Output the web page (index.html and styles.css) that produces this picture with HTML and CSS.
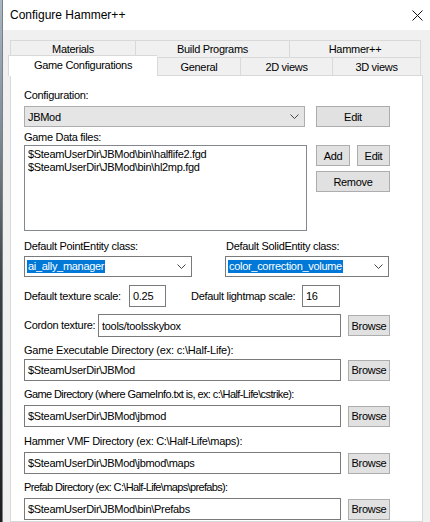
FILE: index.html
```html
<!DOCTYPE html>
<html>
<head>
<meta charset="utf-8">
<title>Configure Hammer++</title>
<link rel="stylesheet" href="styles.css">
</head>
<body>
<div class="screen">
  <div class="desk"></div>
  <div class="window">
    <div class="titlebar">
      <span class="title">Configure Hammer++</span>
      <svg class="close" width="11" height="11" viewBox="0 0 11 11"><path d="M0.5 0.5L10.5 10.5M10.5 0.5L0.5 10.5" stroke="#111" stroke-width="1" fill="none"/></svg>
    </div>
    <div class="client">
      <div class="tabs">
        <div class="tabrow row1">
          <div class="tab t-mat">Materials</div>
          <div class="tab t-build">Build Programs</div>
          <div class="tab t-hpp last">Hammer++</div>
        </div>
        <div class="tabrow row2">
          <div class="tab sel">Game Configurations</div>
          <div class="tab t-gen">General</div>
          <div class="tab t-2d">2D views</div>
          <div class="tab t-3d last">3D views</div>
        </div>
      </div>
      <div class="panel">
        <div class="lbl">Configuration:</div>
        <div class="row cfg">
          <div class="combo gray cfg-combo">
            <span>JBMod</span>
            <svg class="chev" width="9" height="5" viewBox="0 0 9 5"><polyline points="0.5,0.5 4.5,4.5 8.5,0.5" fill="none" stroke="#444" stroke-width="1"/></svg>
          </div>
          <div class="btn wide-btn">Edit</div>
        </div>
        <div class="lbl gap4">Game Data files:</div>
        <div class="row files">
          <div class="listbox">
            <div class="item">$SteamUserDir\JBMod\bin\halflife2.fgd</div>
            <div class="item">$SteamUserDir\JBMod\bin\hl2mp.fgd</div>
          </div>
          <div class="btncol">
            <div class="btnpair">
              <div class="btn add-btn">Add</div>
              <div class="btn edit-btn">Edit</div>
            </div>
            <div class="btn wide-btn remove-btn">Remove</div>
          </div>
        </div>
        <div class="row ents">
          <div class="field f-point">
            <div class="lbl">Default PointEntity class:</div>
            <div class="combo white">
              <span class="hl">ai_ally_manager</span>
              <svg class="chev" width="9" height="5" viewBox="0 0 9 5"><polyline points="0.5,0.5 4.5,4.5 8.5,0.5" fill="none" stroke="#444" stroke-width="1"/></svg>
            </div>
          </div>
          <div class="field f-solid">
            <div class="lbl">Default SolidEntity class:</div>
            <div class="combo white">
              <span class="hl">color_correction_volume</span>
              <svg class="chev" width="9" height="5" viewBox="0 0 9 5"><polyline points="0.5,0.5 4.5,4.5 8.5,0.5" fill="none" stroke="#444" stroke-width="1"/></svg>
            </div>
          </div>
        </div>
        <div class="row scales">
          <span class="lbl l-tex">Default texture scale:</span>
          <div class="tb tb-tex">0.25</div>
          <span class="lbl l-light">Default lightmap scale:</span>
          <div class="tb tb-light">16</div>
        </div>
        <div class="row cordon">
          <span class="lbl l-cordon">Cordon texture:</span>
          <div class="tb tb-cordon">tools/toolsskybox</div>
          <div class="btn browse">Browse</div>
        </div>
        <div class="lbl l-exec gap7">Game Executable Directory (ex: c:\Half-Life):</div>
        <div class="row dir first-dir">
          <div class="tb tb-dir">$SteamUserDir\JBMod</div>
          <div class="btn browse">Browse</div>
        </div>
        <div class="lbl l-game gap7">Game Directory (where GameInfo.txt is, ex: c:\Half-Life\cstrike):</div>
        <div class="row dir">
          <div class="tb tb-dir">$SteamUserDir\JBMod\jbmod</div>
          <div class="btn browse">Browse</div>
        </div>
        <div class="lbl l-vmf gap8">Hammer VMF Directory (ex: C:\Half-Life\maps):</div>
        <div class="row dir">
          <div class="tb tb-dir">$SteamUserDir\JBMod\jbmod\maps</div>
          <div class="btn browse">Browse</div>
        </div>
        <div class="lbl l-prefab gap7">Prefab Directory (ex: C:\Half-Life\maps\prefabs):</div>
        <div class="row dir">
          <div class="tb tb-dir">$SteamUserDir\JBMod\bin\Prefabs</div>
          <div class="btn browse">Browse</div>
        </div>
      </div>
    </div>
  </div>
</div>
</body>
</html>
```
FILE: styles.css
```css
* { box-sizing: border-box; }
html, body { margin: 0; padding: 0; }
body {
  width: 430px;
  height: 522px;
  overflow: hidden;
  background: #f0f0f0;
  font-family: "Liberation Sans", Arial, sans-serif;
  font-size: 11px;
  letter-spacing: -0.3px;
  color: #000;
}
.screen { display: flex; width: 430px; height: 522px; }
.desk {
  width: 2px;
  background: linear-gradient(#a9b8c4, #7d8c98 25%, #3a4046 55%, #1c1f22);
}
.window {
  flex: 1;
  display: flex;
  flex-direction: column;
  border-left: 1px solid #7f7f7f;
  background: #f0f0f0;
  min-width: 0;
}
.titlebar {
  height: 30px;
  flex: none;
  background: #fff;
  display: flex;
  align-items: center;
  justify-content: space-between;
  padding: 0 7px 0 7px;
}
.title { font-size: 12px; letter-spacing: 0; color: #000; }
.close { display: block; }
.client {
  flex: 1;
  display: flex;
  flex-direction: column;
  padding: 10px 7px 0 7px;
  min-height: 0;
}
.tabs { flex: none; }
.tabrow { display: flex; height: 17px; }
.tabrow.row2 { height: 18px; }
.tab {
  height: 100%;
  border-top: 1px solid #d9d9d9;
  border-left: 1px solid #d9d9d9;
  background: #f0f0f0;
  display: flex;
  align-items: center;
  justify-content: center;
  white-space: nowrap;
  flex: none;
}
.tab.last { border-right: 1px solid #d9d9d9; }
.t-mat { width: 125px; }
.t-build { width: 154px; }
.t-hpp { width: 132px; }
.t-gen { width: 83px; }
.t-2d { width: 92px; }
.t-3d { width: 89px; }
.tab.sel {
  width: 149px;
  height: 21px;
  margin: -2px 0 0 -2px;
  background: #fff;
  position: relative;
  z-index: 1;
  padding-bottom: 2px;
}
.panel {
  flex: 1;
  border: 1px solid #d9d9d9;
  background: #fff;
  padding: 13px 0 0 13px;
}
.lbl { height: 13px; line-height: 13px; white-space: nowrap; }
.l-exec { letter-spacing: -0.2px; }
.l-game { letter-spacing: -0.6px; }
.l-vmf { letter-spacing: -0.3px; }
.l-prefab { letter-spacing: -0.65px; }
.gap4 { margin-top: 4px; }
.gap7 { margin-top: 7px; }
.gap8 { margin-top: 8px; }
.row { display: flex; }
.cfg { margin-top: 4px; height: 21px; gap: 11px; }
.combo {
  height: 21px;
  display: flex;
  align-items: center;
  justify-content: space-between;
  padding: 0 5px 0 3px;
  border: 1px solid #adadad;
  white-space: nowrap;
}
.combo.gray { background: #e5e5e5; }
.combo.white { background: #fff; border-color: #7a7a7a; padding-left: 2px; }
.cfg-combo { width: 281px; }
.chev { display: block; flex: none; }
.btn {
  height: 21px;
  border: 1px solid #adadad;
  background: #e1e1e1;
  display: flex;
  align-items: center;
  justify-content: center;
  white-space: nowrap;
  flex: none;
}
.wide-btn { width: 74px; }
.files { margin-top: 1px; }
.listbox {
  width: 283px;
  height: 86px;
  border: 1px solid #828790;
  background: #fff;
  padding: 2px 3px;
}
.item { height: 13px; line-height: 13px; white-space: nowrap; }
.btncol { margin-left: 9px; display: flex; flex-direction: column; gap: 5px; }
.btnpair { display: flex; gap: 7px; }
.add-btn { width: 34px; }
.edit-btn { width: 33px; }
.ents { margin-top: 9px; }
.field { display: flex; flex-direction: column; gap: 3px; }
.f-point { width: 168px; }
.f-solid { width: 164px; margin-left: 33px; }
.f-solid .lbl { padding-left: 1px; }
.hl {
  background: #0078d7;
  color: #fff;
  line-height: 13px;
  padding: 0 1px;
}
.tb {
  height: 22px;
  border: 1px solid #7a7a7a;
  background: #fff;
  display: flex;
  align-items: center;
  padding-left: 3px;
  white-space: nowrap;
  flex: none;
}
.scales { margin-top: 8px; align-items: center; height: 22px; }
.l-tex { width: 105px; }
.tb-tex { width: 37px; }
.l-light { width: 111px; margin-left: 25px; }
.tb-light { width: 38px; }
.cordon { margin-top: 7px; align-items: center; height: 23px; }
.l-cordon { width: 74px; }
.tb-cordon { width: 243px; height: 23px; }
.browse { width: 42px; margin-left: 7px; }
.dir { margin-top: 4px; height: 22px; align-items: center; }
.dir.first-dir { margin-top: 2px; }
.tb-dir { width: 317px; }
```
